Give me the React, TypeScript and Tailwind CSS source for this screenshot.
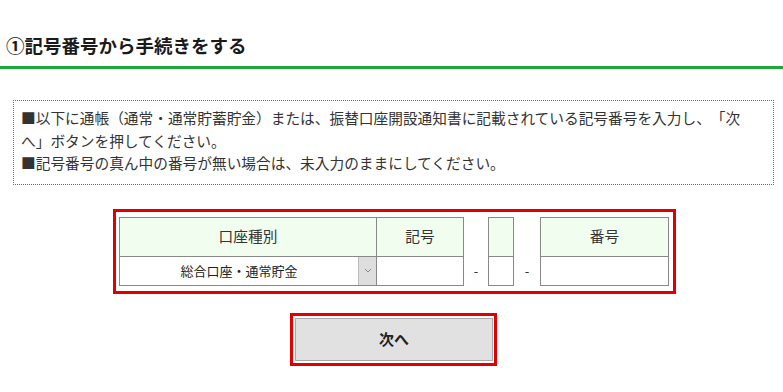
import { useState } from "react";

const font = { fontFamily: '"Noto Sans CJK JP", "Noto Sans", sans-serif' };

function Dash() {
  return (
    <div className="flex flex-col">
      <div className="h-[39px]" />
      <div className="flex h-[30px] items-center justify-center text-[13px] text-[#333]">-</div>
    </div>
  );
}

export default function App() {
  const [kind, setKind] = useState("総合口座・通常貯金");

  return (
    <div className="h-[392px] w-[783px] overflow-hidden bg-white text-[#333] [text-spacing-trim:space-all]" style={font}>
      <div className="flex h-[69px] items-end border-b-[3px] border-[#1fa83a] pb-[8px] pl-[6px]">
        <h1 className="text-[18.5px] font-bold leading-[26px] text-[#1a1a1a]">①記号番号から手続きをする</h1>
      </div>

      <div className="ml-[13px] mt-[31px] w-[761px] border border-dotted border-[#1f9e35] pb-[9px] pl-[7px] pr-[24px] pt-[6px] text-[14.7px] leading-[22.5px]">
        <p>■以下に通帳（通常・通常貯蓄貯金）または、振替口座開設通知書に記載されている記号番号を入力し、「次へ」ボタンを押してください。</p>
        <p>■記号番号の真ん中の番号が無い場合は、未入力のままにしてください。</p>
      </div>

      <div className="ml-[113px] mt-[24px] flex w-[563px] border-[3px] border-[#e00000] pb-[5px] pl-[3px] pr-[4px] pt-[5px]">
        <div className="grid grid-cols-[256px_86px] gap-px border border-[#888] bg-[#888]">
          <div className="flex h-[38px] items-center justify-center bg-[#f1fdef] text-[14.7px]">口座種別</div>
          <div className="flex h-[38px] items-center justify-center bg-[#f1fdef] text-[14.7px]">記号</div>
          <div className="flex h-[28px] bg-white">
            <div className="flex flex-1 items-center justify-center text-[13px] text-[#222]">{kind}</div>
            <button
              type="button"
              onClick={() => setKind(kind)}
              className="flex w-[18px] items-center justify-center border-l border-[#bbb] bg-[#dedede]"
            >
              <svg width="8" height="5" viewBox="0 0 8 5" fill="none">
                <path d="M1 1l3 3 3-3" stroke="#888" strokeWidth="1" />
              </svg>
            </button>
          </div>
          <input className="h-[28px] w-full bg-white outline-none" />
        </div>
        <div className="w-[24px]">
          <Dash />
        </div>
        <div className="grid grid-cols-[24px] gap-px border border-[#888] bg-[#888]">
          <div className="h-[38px] bg-[#f1fdef]" />
          <input className="h-[28px] w-full bg-white outline-none" />
        </div>
        <div className="w-[26px]">
          <Dash />
        </div>
        <div className="grid grid-cols-[127px] gap-px border border-[#888] bg-[#888]">
          <div className="flex h-[38px] items-center justify-center bg-[#f1fdef] text-[14.7px]">番号</div>
          <input className="h-[28px] w-full bg-white outline-none" />
        </div>
      </div>

      <div className="ml-[290px] mt-[19px] w-[207px] border-[3px] border-[#e00000] py-[2px] pl-[2px] pr-[1px]">
        <button
          type="button"
          className="flex h-[43px] w-[198px] items-center justify-center border border-[#aaa] bg-[#e1e1e1] text-[15px] font-bold text-[#222]"
        >
          次へ
        </button>
      </div>
    </div>
  );
}
